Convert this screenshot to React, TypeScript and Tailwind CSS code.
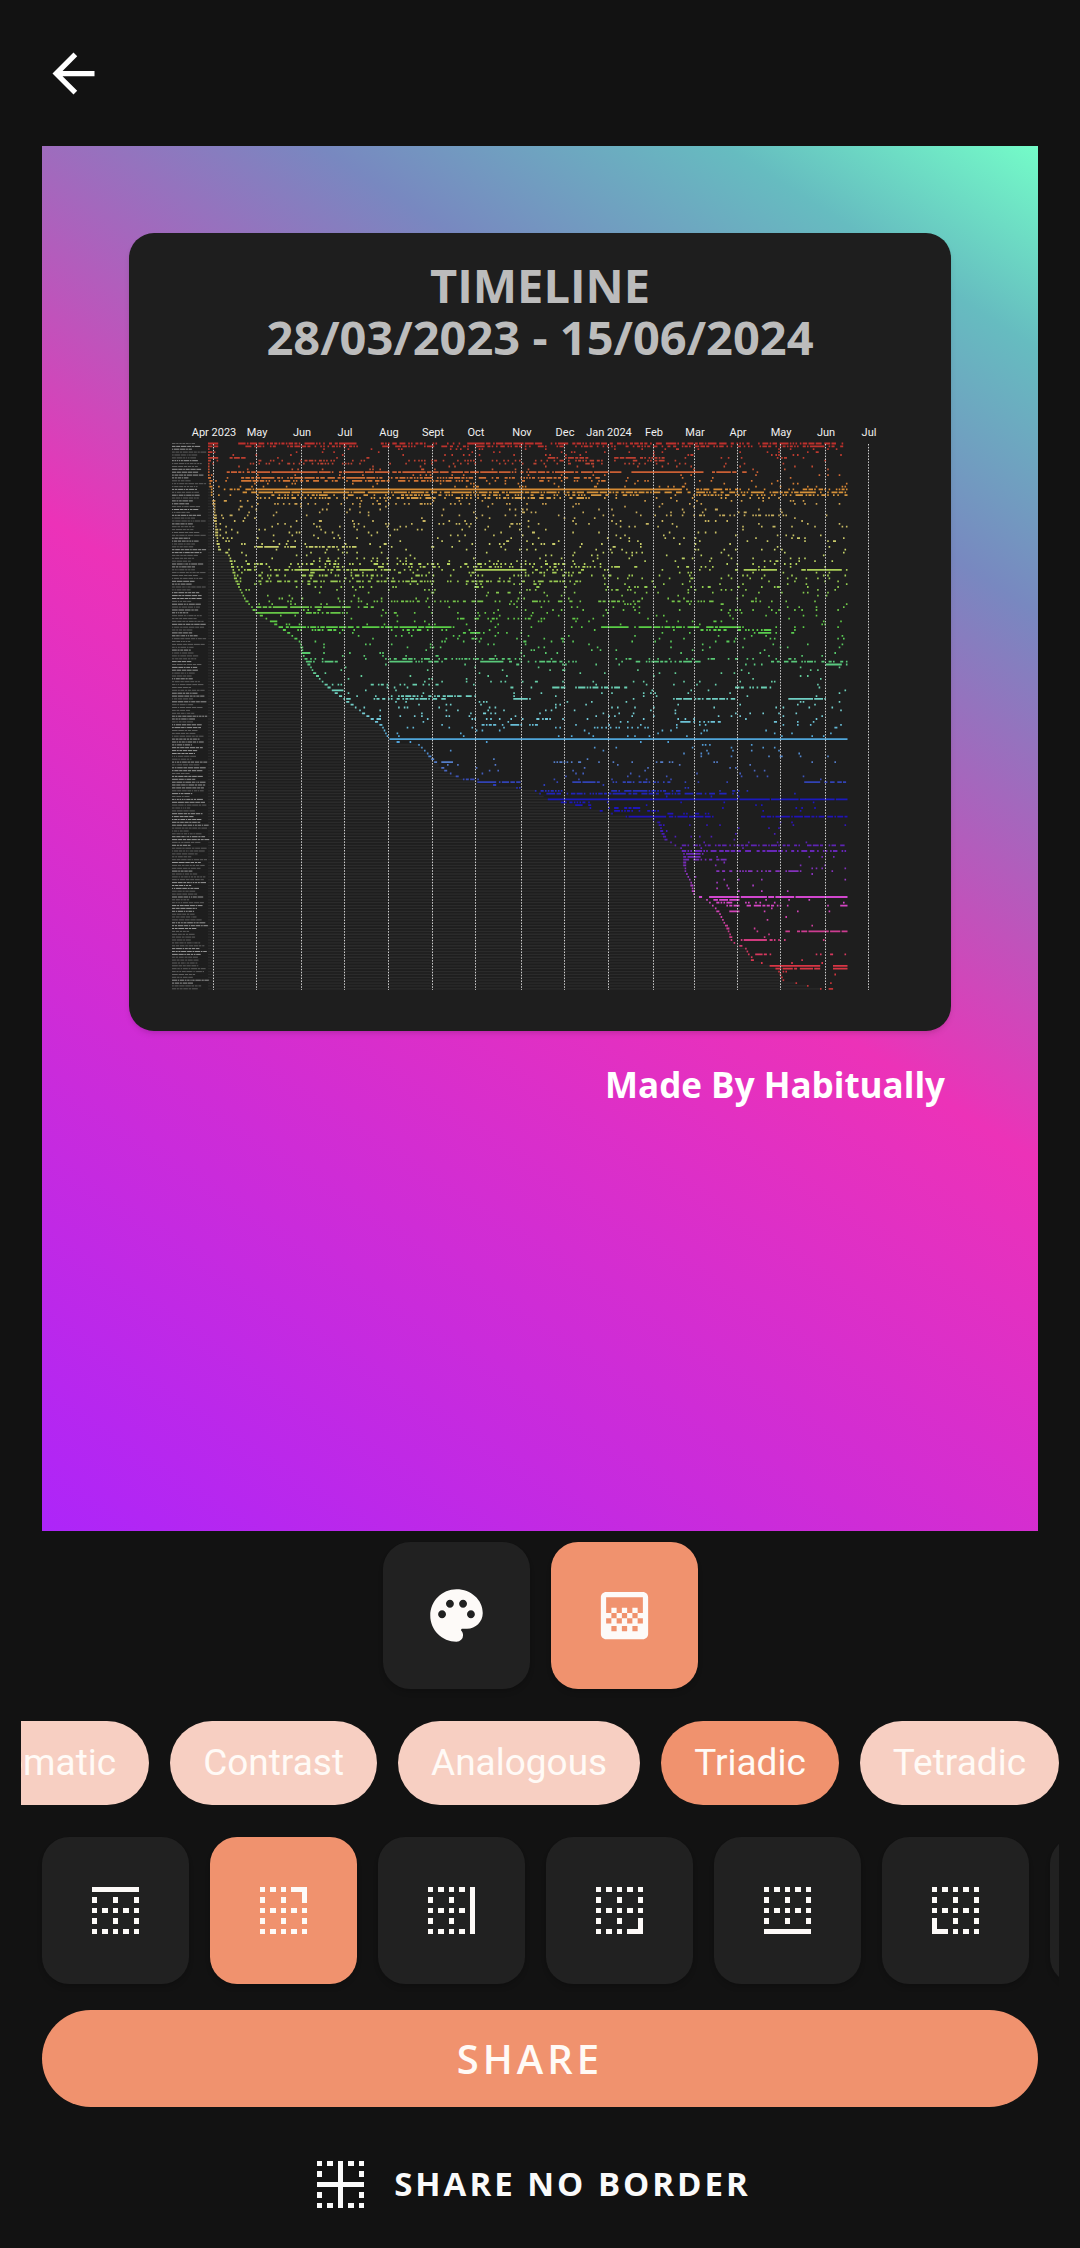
import { useState } from "react";
import { MdArrowBack, MdGradient, MdPalette } from "react-icons/md";

const DAY = 1.44;
const ROW = 2.87;
const TOP = 443.5;
const BOTTOM = 990;
const START = 208;
const END = 847;

const MONTHS: [string, number][] = [
  ["Apr 2023", 213], ["May", 256], ["Jun", 301], ["Jul", 344], ["Aug", 388],
  ["Sept", 432], ["Oct", 475], ["Nov", 521], ["Dec", 564], ["Jan 2024", 608],
  ["Feb", 653], ["Mar", 694], ["Apr", 737], ["May", 780], ["Jun", 825], ["Jul", 868],
];

/* [y, x]: the day on which the habit drawn at height y was first logged */
const FIRST_DAY: [number, number][] = [
  [443, 208], [470, 208], [485, 210], [500, 213], [540, 217], [550, 219], [553, 228], [562, 231],
  [575, 234], [590, 240], [600, 245], [608, 252], [614, 258], [622, 272], [634, 290], [642, 300],
  [655, 303], [670, 312], [680, 320], [690, 332], [700, 345], [710, 359], [718, 370], [725, 381],
  [737, 387], [741, 388], [744, 418], [750, 424], [760, 433], [772, 447], [780, 465], [786, 500],
  [790, 535], [795, 541], [800, 550], [808, 590], [816, 620], [820, 658], [830, 661], [840, 666],
  [848, 680], [851, 683], [872, 685], [880, 690], [895, 694], [899, 706], [905, 712], [915, 720],
  [930, 728], [942, 732], [948, 745], [960, 752], [965, 768], [970, 778], [980, 783], [986, 808],
  [990, 826],
];

const HUES: [number, [number, number, number]][] = [
  [443, [190, 48, 44]], [465, [188, 68, 50]], [473, [204, 98, 52]], [490, [216, 142, 52]],
  [510, [200, 170, 92]], [550, [200, 210, 108]], [570, [172, 208, 88]], [607, [108, 196, 72]],
  [627, [90, 206, 70]], [660, [88, 200, 118]], [690, [108, 208, 186]], [715, [120, 206, 214]],
  [739, [80, 166, 218]], [765, [84, 120, 198]], [781, [52, 70, 180]], [798, [26, 26, 190]],
  [818, [34, 18, 184]], [845, [94, 36, 180]], [875, [138, 52, 188]], [899, [216, 72, 208]],
  [930, [204, 60, 148]], [965, [218, 54, 70]], [990, [190, 52, 52]],
];

/* [y, from, to, share of days logged] */
const STREAKS: [number, number, number, number][] = [
  [443, 208, 218, 0.9], [443, 227, 357, 0.6], [443, 380, 460, 0.5], [443, 464, 847, 0.6],
  [446, 208, 218, 0.7], [446, 245, 357, 0.45], [446, 380, 847, 0.45],
  [451, 208, 214, 0.9], [457, 208, 218, 0.8], [457, 228, 245, 0.8], [457, 545, 592, 0.6], [457, 610, 665, 0.5],
  [460, 208, 218, 0.7], [460, 250, 367, 0.25], [460, 400, 520, 0.25], [460, 545, 690, 0.35],
  [463, 265, 370, 0.25], [463, 400, 690, 0.15],
  [472, 228, 258, 0.6], [472, 256, 332, 0.9], [472, 339, 515, 0.93], [472, 520, 620, 0.85], [472, 630, 702, 0.95], [472, 710, 748, 0.6],
  [477, 240, 480, 0.65], [477, 480, 600, 0.45], [480, 240, 470, 0.5], [480, 500, 640, 0.2],
  [489, 228, 256, 0.4], [489, 256, 680, 1], [489, 695, 740, 0.7], [489, 800, 847, 0.6],
  [492, 240, 256, 0.5], [492, 256, 385, 0.9], [492, 385, 690, 0.75], [492, 695, 847, 0.65],
  [495, 256, 640, 0.45], [495, 690, 847, 0.45], [498, 256, 600, 0.35],
  [503, 256, 600, 0.16], [509, 320, 350, 0.2], [515, 690, 790, 0.25],
  [523, 256, 480, 0.1], [526, 256, 480, 0.12], [546, 256, 296, 0.75], [546, 305, 355, 0.6], [543, 450, 600, 0.12],
  [563, 234, 600, 0.18], [566, 234, 700, 0.16], [569, 234, 300, 0.5], [569, 296, 308, 1], [569, 310, 395, 0.6],
  [569, 475, 525, 0.94], [569, 744, 776, 0.95], [569, 800, 841, 0.97], [572, 258, 600, 0.1],
  [575, 258, 430, 0.28], [575, 430, 660, 0.15], [580, 258, 430, 0.45], [580, 430, 580, 0.3], [586, 258, 720, 0.1],
  [600, 340, 640, 0.3], [600, 650, 790, 0.22], [606, 256, 350, 0.88], [606, 360, 375, 0.5], [609, 300, 320, 0.3],
  [612, 256, 298, 1], [612, 305, 348, 0.7], [609, 700, 760, 0.2], [618, 470, 580, 0.3], [621, 264, 276, 1],
  [626, 274, 445, 0.75], [626, 425, 450, 1], [626, 600, 628, 1], [626, 638, 700, 0.85], [626, 705, 740, 0.75],
  [629, 288, 345, 0.3], [629, 400, 450, 0.3], [629, 700, 770, 0.4], [632, 470, 480, 1], [632, 758, 770, 1],
  [652, 302, 310, 0.9], [658, 385, 520, 0.4], [658, 625, 800, 0.18], [661, 305, 340, 0.6], [661, 388, 412, 0.95],
  [661, 415, 445, 0.6], [661, 480, 503, 1], [661, 505, 590, 0.4], [661, 635, 700, 0.7], [661, 770, 847, 0.6], [664, 825, 841, 1],
  [684, 330, 440, 0.3], [687, 550, 628, 0.5], [687, 735, 770, 0.5], [690, 331, 342, 0.9], [695, 390, 485, 0.55],
  [698, 340, 350, 0.9], [698, 373, 445, 0.65], [698, 512, 530, 0.8], [698, 672, 735, 0.75], [698, 787, 826, 0.9],
  [719, 368, 382, 0.7], [721, 680, 720, 0.5], [724, 480, 540, 0.3], [727, 590, 650, 0.3], [718, 470, 560, 0.15],
  [739, 388, 847, 1],
  [761, 440, 450, 0.8], [761, 550, 580, 0.4], [761, 655, 680, 0.5],
  [778, 460, 480, 0.5], [781, 465, 520, 0.65], [781, 572, 600, 0.7], [781, 610, 670, 0.5], [781, 793, 847, 0.6], [787, 495, 520, 0.8],
  [792, 540, 560, 0.6], [792, 610, 680, 0.6], [792, 715, 740, 0.3], [795, 545, 740, 0.55], [798, 542, 847, 0.97],
  [801, 545, 585, 0.8], [804, 560, 590, 0.5], [809, 600, 640, 0.5], [812, 610, 660, 0.4], [815, 665, 710, 0.5],
  [818, 628, 665, 1], [818, 668, 713, 0.85], [818, 760, 847, 0.85], [824, 670, 720, 0.15],
  [844, 670, 847, 0.6], [852, 684, 847, 0.55], [855, 684, 700, 0.8], [858, 684, 700, 0.8], [861, 684, 725, 0.6],
  [872, 715, 780, 0.6], [872, 785, 800, 0.6], [867, 810, 822, 0.6],
  [898, 708, 847, 0.96], [901, 712, 740, 0.6], [904, 715, 760, 0.4], [907, 725, 790, 0.55], [907, 840, 847, 1], [910, 728, 738, 0.9],
  [930, 780, 790, 0.5], [930, 796, 847, 0.85], [939, 738, 785, 0.7], [953, 752, 770, 0.5], [953, 820, 832, 0.7],
  [965, 770, 820, 0.93], [965, 832, 846, 1], [968, 770, 820, 0.85], [968, 832, 846, 1], [973, 780, 786, 0.8], [988, 828, 832, 1],
];

function scatter(y: number) {
  if (y < 449) return 0;
  if (y < 484) return 0.05;
  if (y < 500) return 0.06;
  if (y < 558) return 0.04;
  if (y < 590) return 0.06;
  if (y < 645) return 0.04;
  if (y < 700) return 0.025;
  if (y < 737) return 0.035;
  if (y < 810) return 0.02;
  return 0.016;
}

function firstDay(y: number) {
  for (let i = 1; i < FIRST_DAY.length; i++) {
    const [y1, x1] = FIRST_DAY[i];
    if (y <= y1) {
      const [y0, x0] = FIRST_DAY[i - 1];
      return x0 + ((x1 - x0) * (y - y0)) / (y1 - y0);
    }
  }
  return 828;
}

function hue(y: number) {
  for (let i = 1; i < HUES.length; i++) {
    const [y1, b] = HUES[i];
    if (y <= y1) {
      const [y0, a] = HUES[i - 1];
      const t = (y - y0) / (y1 - y0);
      return `rgb(${a.map((v, k) => Math.round(v + (b[k] - v) * t)).join(",")})`;
    }
  }
  return "rgb(190,52,52)";
}

let seed = 20230328;
function random() {
  seed = (seed * 1664525 + 1013904223) % 4294967296;
  return seed / 4294967296;
}

const rows = Array.from({ length: Math.floor((BOTTOM - TOP) / ROW) + 1 }, (_, i) => {
  const y = TOP + i * ROW;
  const first = firstDay(y);
  const streaks = STREAKS.filter((s) => s[0] >= y - ROW / 2 && s[0] < y + ROW / 2);
  let d = "";
  for (let x = START; x < END; x += DAY) {
    if (x < first - DAY) continue;
    let p = scatter(y);
    if (x < first + DAY / 2) p = 0.95;
    for (const s of streaks) if (x >= s[1] && x <= s[2]) p = Math.max(p, s[3]);
    if (random() < p) d += `M${x.toFixed(1)} ${y.toFixed(1)}h1.6`;
  }
  let name = "";
  const length = 16 + random() * 18;
  for (let x = 172; x < 172 + length; ) {
    const w = 1 + random() * 5;
    name += `M${x.toFixed(1)} ${y.toFixed(1)}h${w.toFixed(1)}`;
    x += w + 0.7;
  }
  return { y, first, d, name, color: hue(y), shade: random() < 0.45 ? "#666666" : "#a4a4a4" };
});

function Timeline() {
  return (
    <svg viewBox="129 415 822 616" className="block w-full" role="img" aria-label="Habit timeline">
      {rows.map((r) => (
        <g key={r.y} fill="none">
          <path d={`M${START} ${r.y}H${r.first}`} stroke="#2b2b2b" strokeWidth="1.3" />
          <path d={r.name} stroke={r.shade} strokeWidth="0.9" />
          <path d={r.d} stroke={r.color} strokeWidth="1.8" />
        </g>
      ))}
      {MONTHS.map(([label, x]) => (
        <g key={x}>
          <path d={`M${x + 0.5} 444V990`} stroke="#d0d0d0" strokeWidth="1" strokeDasharray="1.5 1.4" />
          <text x={x + 1} y="436" textAnchor="middle" fontSize="11" fill="#f0f0f0" fontFamily="Roboto, sans-serif">
            {label}
          </text>
        </g>
      ))}
    </svg>
  );
}

type Edge = "top" | "topRight" | "right" | "bottomRight" | "bottom" | "bottomLeft" | "left" | "inner";

const EDGE_LINES: Record<Edge, string> = {
  top: "M3 3h18v2H3z",
  topRight: "M15 3h6v6h-2V5h-4z",
  right: "M19 3h2v18h-2z",
  bottomRight: "M19 15h2v6h-6v-2h4z",
  bottom: "M3 19h18v2H3z",
  bottomLeft: "M3 15h2v4h4v2H3z",
  left: "M3 3h2v18H3z",
  inner: "M11 3h2v8h8v2h-8v8h-2v-8H3v-2h8z",
};

function BorderIcon({ edge }: { edge: Edge }) {
  let dots = "";
  for (let r = 0; r < 5; r++) {
    for (let c = 0; c < 5; c++) {
      if (r % 2 === 1 && c % 2 === 1) continue;
      if (edge === "top" && r === 0) continue;
      if (edge === "bottom" && r === 4) continue;
      if (edge === "right" && c === 4) continue;
      if (edge === "left" && c === 0) continue;
      dots += `M${3 + c * 4} ${3 + r * 4}h2v2h-2z`;
    }
  }
  return (
    <svg viewBox="0 0 24 24" className="size-[63px] shrink-0" fill="currentColor" shapeRendering="crispEdges" aria-hidden="true">
      <path d={dots} />
      <path d={EDGE_LINES[edge]} />
    </svg>
  );
}

const tile = "flex size-[147px] shrink-0 items-center justify-center rounded-[27px] text-[#fdfaf8] shadow-md";
const on = "bg-[#f0926e]";
const off = "bg-[#212121]";

const SCHEMES = ["Monochromatic", "Contrast", "Analogous", "Triadic", "Tetradic"];
const EDGES: [Edge, string][] = [
  ["top", "Top"], ["topRight", "Top right"], ["right", "Right"], ["bottomRight", "Bottom right"],
  ["bottom", "Bottom"], ["bottomLeft", "Bottom left"], ["left", "Left"],
];

export default function App() {
  const [fill, setFill] = useState("gradient");
  const [scheme, setScheme] = useState("Triadic");
  const [edge, setEdge] = useState<Edge>("topRight");

  return (
    <main className="flex min-h-screen flex-col overflow-x-hidden bg-[#121212] font-['Open_Sans',sans-serif]">
      <header className="flex h-[146px] items-center px-[42px]">
        <button aria-label="Back" className="text-white">
          <MdArrowBack className="size-[63px]" />
        </button>
      </header>

      <section className="mx-[42px] flex-1 bg-[linear-gradient(33deg,#ad25f9_0%,#ec32b8_50%,#7888c0_77%,#66bcc0_90%,#74fcc8_100%)] px-[87px] pt-[87px]">
        <article className="rounded-[25px] bg-[#1e1e1e] pt-[26px] shadow-md">
          <h1 className="mb-[52px] text-center text-[47px] leading-[52px] font-bold text-[#bcbcbc]">
            TIMELINE
            <br />
            28/03/2023 - 15/06/2024
          </h1>
          <Timeline />
        </article>
        <p className="mt-7 mr-[6px] text-right text-[35px] leading-[52px] font-bold text-white">Made By Habitually</p>
      </section>

      <div className="mt-[11px] flex justify-center gap-[21px]">
        <button aria-label="Solid colour" aria-pressed={fill === "solid"} onClick={() => setFill("solid")} className={`${tile} ${fill === "solid" ? on : off}`}>
          <MdPalette className="size-[63px]" />
        </button>
        <button aria-label="Gradient" aria-pressed={fill === "gradient"} onClick={() => setFill("gradient")} className={`${tile} ${fill === "gradient" ? on : off}`}>
          <MdGradient className="size-[63px]" />
        </button>
      </div>

      <div className="mx-[21px] mt-8 flex justify-end gap-[21px] overflow-hidden">
        {SCHEMES.map((s) => (
          <button
            key={s}
            aria-pressed={s === scheme}
            onClick={() => setScheme(s)}
            className={`h-[84px] shrink-0 rounded-full px-[33px] font-[Roboto,sans-serif] text-[37px] text-[#fffaf6] ${s === scheme ? on : "bg-[#f7cfc2]"}`}
          >
            {s}
          </button>
        ))}
      </div>

      <div className="mx-[21px] mt-6 flex gap-[21px] overflow-hidden py-2 pl-[21px]">
        {EDGES.map(([id, label]) => (
          <button key={id} aria-label={label} aria-pressed={id === edge} onClick={() => setEdge(id)} className={`${tile} ${id === edge ? on : off}`}>
            <BorderIcon edge={id} />
          </button>
        ))}
      </div>

      <button className="mx-[42px] mt-[18px] h-[97px] rounded-full bg-[#f0926e] pr-5 text-[40px] font-semibold tracking-[4px] text-[#fffaf6]">
        SHARE
      </button>
      <button className="mt-4 mb-[3px] flex h-[122px] items-center justify-center gap-[22px] pr-5 text-[33px] font-bold tracking-[3px] text-[#fafafa]">
        <BorderIcon edge="inner" />
        SHARE NO BORDER
      </button>
    </main>
  );
}
